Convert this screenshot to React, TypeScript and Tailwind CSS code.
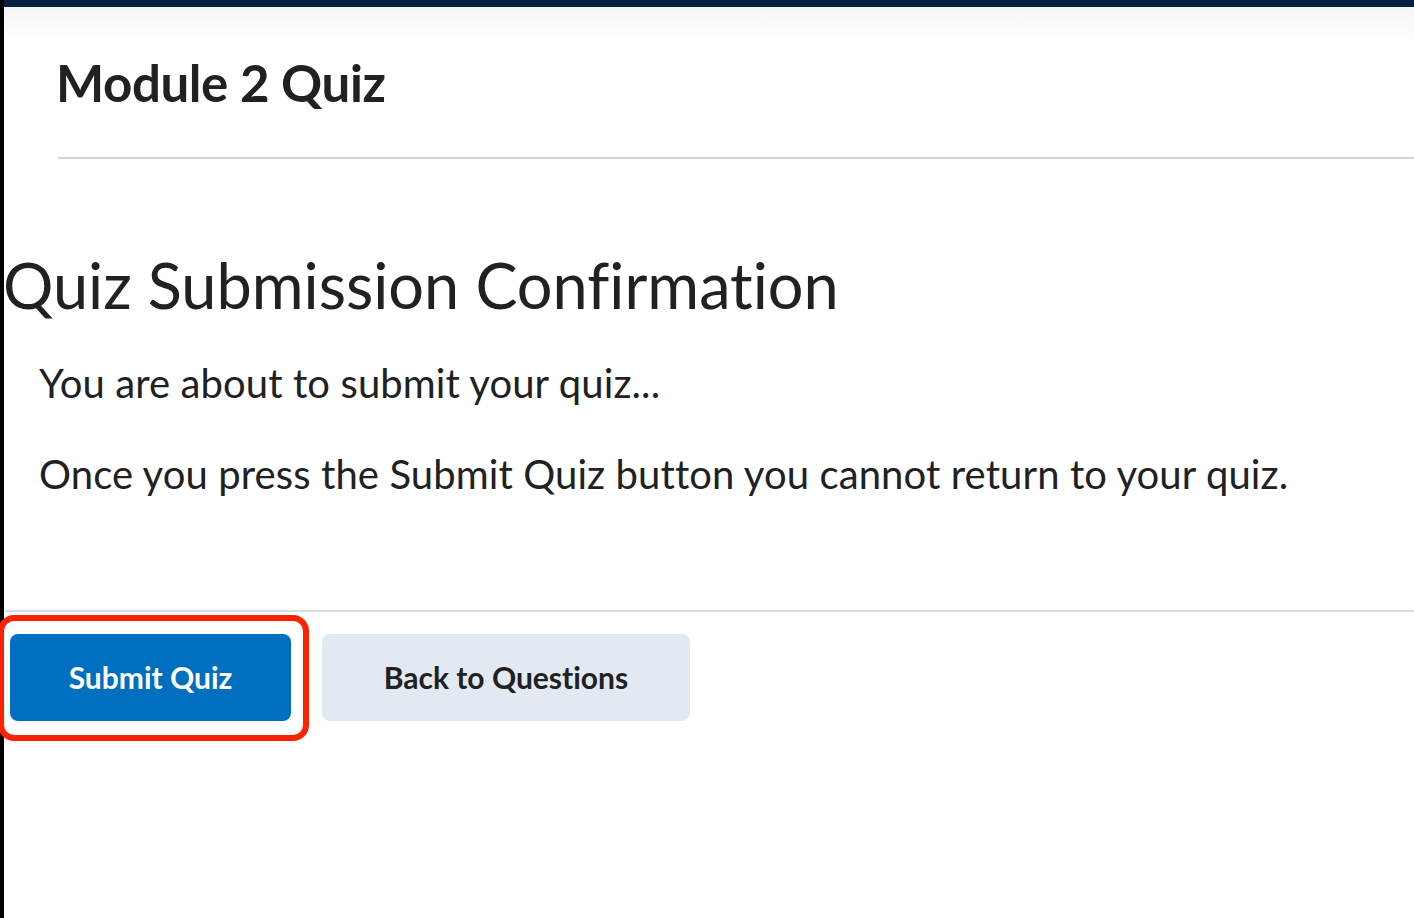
export default function App() {
  return (
    <div className="flex min-h-screen bg-white text-[#202122] [font-family:Lato,'Open_Sans',sans-serif] [font-variant-ligatures:none]">
      <div className="w-[4px] shrink-0 bg-black" />
      <div className="flex min-w-0 flex-1 flex-col">
        <div className="h-[7px] bg-[#061f42]" />
        <div className="h-[38px] bg-gradient-to-b from-[#f6f6f6] to-white" />
        <div className="pl-[52px] pt-[6px]">
          <h1 className="text-[51px] font-bold leading-[64px] tracking-[-0.4px]">Module 2 Quiz</h1>
        </div>
        <div className="ml-[54px] mt-[42px] h-[2px] bg-[#cdd6de]" />

        <main className="pt-[90px]">
          <h2 className="-ml-[1px] text-[63px] font-normal leading-[72px]">Quiz Submission Confirmation</h2>
          <div className="pl-[35px] text-[40px] leading-[48px] tracking-[0.1px]">
            <p className="mt-[38px]">You are about to submit your quiz...</p>
            <p className="mt-[43px]">Once you press the Submit Quiz button you cannot return to your quiz.</p>
          </div>

          <div className="ml-[1px] mt-[112px] h-[2px] bg-[#d5dce4]" />

          <div className="flex gap-[31px] pl-[6px] pt-[22px]">
            <div className="relative">
              <button className="h-[87px] w-[281px] rounded-[8px] bg-[#006fbf] text-[30px] font-bold text-white">
                Submit Quiz
              </button>
              <div className="pointer-events-none absolute -left-[12px] -top-[19px] h-[126px] w-[311px] rounded-[16px] border-[6px] border-[#ff2200]" />
            </div>
            <button className="h-[87px] w-[368px] rounded-[8px] bg-[#e3e9f1] text-[30px] font-bold text-[#202122]">
              Back to Questions
            </button>
          </div>
        </main>
      </div>
    </div>
  );
}
